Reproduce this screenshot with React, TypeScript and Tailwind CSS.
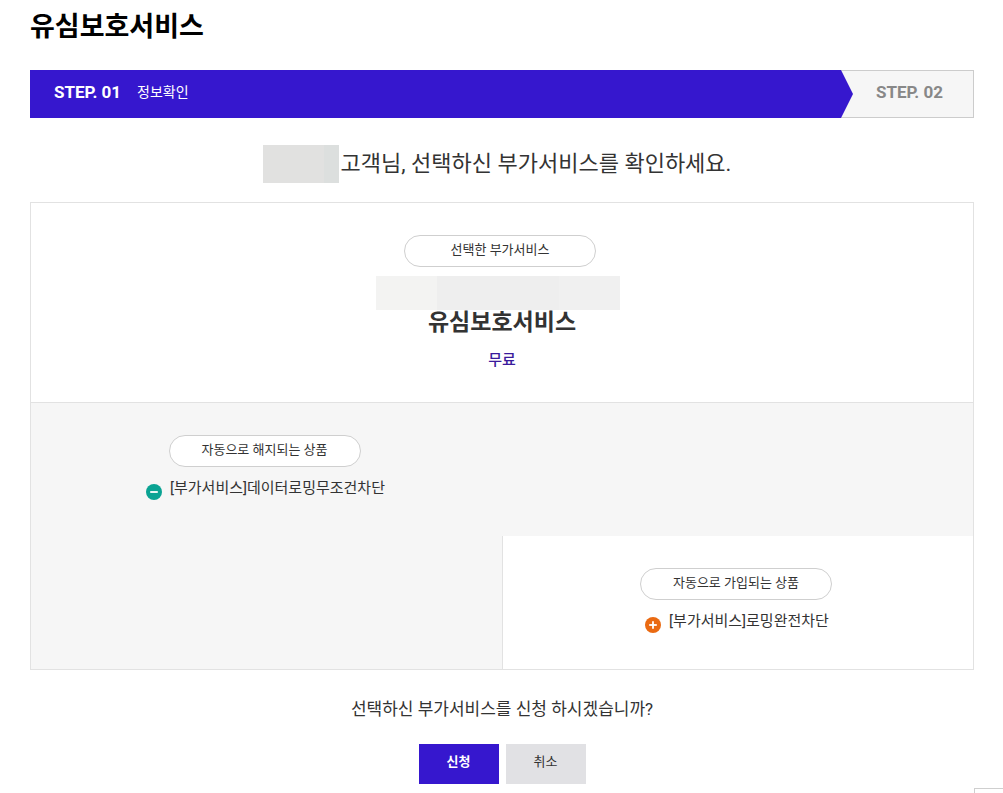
import React from 'react';

type ProductKind = 'remove' | 'add';

function Pill({ children }: { children: React.ReactNode }) {
  return (
    <h3 className="w-48 h-8 mr-1 pb-[2px] flex items-center justify-center rounded-full border border-[#cfcfcf] bg-white text-[13px] leading-5 text-[#333333]">
      {children}
    </h3>
  );
}

function ProductIcon({ kind }: { kind: ProductKind }) {
  return (
    <svg viewBox="0 0 16 16" className="w-4 h-4 shrink-0" aria-hidden="true">
      <circle cx="8" cy="8" r="8" fill={kind === 'add' ? '#ea6a12' : '#0aa393'} />
      <path d="M4.2 8h7.6" stroke="#ffffff" strokeWidth="1.8" />
      {kind === 'add' && <path d="M8 4.2v7.6" stroke="#ffffff" strokeWidth="1.8" />}
    </svg>
  );
}

function ProductGroup({ title, kind, items }: { title: string; kind: ProductKind; items: string[] }) {
  return (
    <div className="pt-8 pb-9 flex flex-col items-center">
      <Pill>{title}</Pill>
      <ul className="mt-[10px] pr-[2px]">
        {items.map((item) => (
          <li key={item} className="flex items-end gap-2 text-[15px] leading-[23px] text-[#333333]">
            <ProductIcon kind={kind} />
            {item}
          </li>
        ))}
      </ul>
    </div>
  );
}

export default function App() {
  return (
    <main className="bg-white px-[30px] pr-[29px] pt-[11px] pb-2 font-['Roboto','Noto_Sans_CJK_KR',sans-serif]">
      <h1 className="text-[27px] leading-8 font-bold text-black">유심보호서비스</h1>

      {/* Steps */}
      <ol className="mt-[27px] flex h-12">
        <li className="flex-1 flex items-center gap-4 pl-6 pb-1 bg-[#3617ce] text-white" aria-current="step">
          <strong className="text-[17px] leading-6 font-bold">STEP. 01</strong>
          <span className="text-[14px] leading-6">정보확인</span>
        </li>
        <li className="relative flex items-center pl-[35px] pr-[30px] pb-1 bg-[#f6f6f6] border-y border-r border-[#cccccc]">
          <svg viewBox="0 0 12 48" className="absolute -top-px left-0 w-3 h-12" aria-hidden="true">
            <path d="M0 0L12 24L0 48Z" fill="#3617ce" />
          </svg>
          <strong className="text-[17px] leading-6 font-bold text-[#888888]">STEP. 02</strong>
        </li>
      </ol>

      {/* Customer name is masked */}
      <h2 className="mt-[27px] pr-[10px] flex justify-center items-center gap-[2px] text-[22px] leading-9 text-[#333333]">
        <span className="flex h-[38px]">
          <span className="w-[61px] bg-[#e1e1e0]" />
          <span className="w-[15px] bg-[#dcdfde]" />
        </span>
        고객님, 선택하신 부가서비스를 확인하세요.
      </h2>

      <section className="mt-[19px] border border-[#e2e2e2]">
        <div className="pt-8 pb-[30px] flex flex-col items-center border-b border-[#e2e2e2]">
          <Pill>선택한 부가서비스</Pill>
          <div className="mt-[9px] pr-2 flex h-[34px]">
            <span className="w-[61px] bg-[#f3f3f2]" />
            <span className="w-[122px] bg-[#eeeeee]" />
            <span className="w-[61px] bg-[#f0f0f0]" />
          </div>
          <p className="text-[23px] leading-[26px] font-bold text-[#333333]">유심보호서비스</p>
          <p className="mt-3 text-[15px] leading-6 font-medium text-[#3a1a9c]">무료</p>
        </div>

        {/* Removed products sit top left, added ones bottom right */}
        <div className="grid grid-cols-2 bg-[#f6f6f6]">
          <ProductGroup title="자동으로 해지되는 상품" kind="remove" items={['[부가서비스]데이터로밍무조건차단']} />
          <div className="col-start-2 row-start-2 bg-white border-l border-[#e2e2e2]">
            <ProductGroup title="자동으로 가입되는 상품" kind="add" items={['[부가서비스]로밍완전차단']} />
          </div>
        </div>
      </section>

      <p className="mt-[25px] text-center text-[17px] leading-7 text-[#333333]">선택하신 부가서비스를 신청 하시겠습니까?</p>
      <div className="mt-[21px] flex justify-center gap-[7px] text-[13px] leading-5">
        <button type="button" className="w-20 h-10 pb-1 bg-[#3617ce] font-bold text-white">
          신청
        </button>
        <button type="button" className="w-20 h-10 pb-1 bg-[#e1e1e4] text-[#333333]">
          취소
        </button>
      </div>

      <div className="fixed right-0 bottom-0 w-[29px] h-[5px] border-t border-l border-[#cfcfcf] bg-white" />
    </main>
  );
}
